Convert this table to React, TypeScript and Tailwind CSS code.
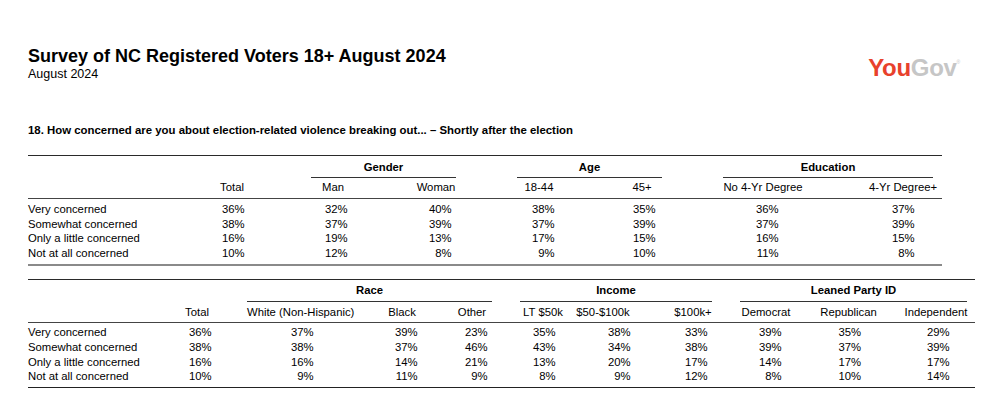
import React from "react";

type Col = { w: string; head?: string; pad?: string; spacer?: boolean };

const t1Cols: Col[] = [
  { w: "w-[171px]" },
  { w: "w-[66px]", head: "Total", pad: "pl-[2px]" },
  { w: "w-[17px]", spacer: true },
  { w: "w-[102px]", head: "Man", pad: "pl-[6px]" },
  { w: "w-[104px]", head: "Woman", pad: "pl-[8px]" },
  { w: "w-[102px]", head: "18-44", pad: "pl-[8px]" },
  { w: "w-[104px]", head: "45+", pad: "pl-[4px]" },
  { w: "w-[138px]", head: "No 4-Yr Degree", pad: "pl-[8px]" },
  { w: "w-[32px]", spacer: true },
  { w: "w-[78px]", head: "4-Yr Degree+", pad: "pl-0" },
];

const t1Groups = [
  { w: "w-[254px]" },
  { w: "w-[206px]", label: "Gender", m: "ml-[29px] mr-[32px]" },
  { w: "w-[206px]", label: "Age", m: "ml-[29px] mr-[32px]" },
  { w: "w-[248px]", label: "Education", m: "ml-[29px] mr-[9px]" },
];

const t1Rows: [string, number[]][] = [
  ["Very concerned", [36, 32, 40, 38, 35, 36, 37]],
  ["Somewhat concerned", [38, 37, 39, 37, 39, 37, 39]],
  ["Only a little concerned", [16, 19, 13, 17, 15, 16, 15]],
  ["Not at all concerned", [10, 12, 8, 9, 10, 11, 8]],
];

const t2Cols: Col[] = [
  { w: "w-[142px]" },
  { w: "w-[54px]", head: "Total", pad: "pl-[6px]" },
  { w: "w-[23px]", spacer: true },
  { w: "w-[106px]", head: "White (Non-Hispanic)", pad: "pl-[4px]" },
  { w: "w-[98px]", head: "Black", pad: "pl-[8px]" },
  { w: "w-[42px]", head: "Other", pad: "pl-[8px]" },
  { w: "w-[27px]", spacer: true },
  { w: "w-[46px]", head: "LT $50k", pad: "pl-[2px]" },
  { w: "w-[74px]", head: "$50-$100k", pad: "pl-[32px]" },
  { w: "w-[6px]", spacer: true },
  { w: "w-[94px]", head: "$100k+", pad: "pl-[6px]" },
  { w: "w-[52px]", head: "Democrat", pad: "pl-[8px]" },
  { w: "w-[8px]", spacer: true },
  { w: "w-[97px]", head: "Republican", pad: "pl-[2px]" },
  { w: "w-[78px]", head: "Independent", pad: "pl-[4px]" },
];

const t2Groups = [
  { w: "w-[219px]" },
  { w: "w-[246px]", label: "Race", m: "ml-0 mr-[1px]" },
  { w: "w-[27px]" },
  { w: "w-[220px]", label: "Income", m: "ml-0 mr-[28px]" },
  { w: "w-[235px]", label: "Leaned Party ID", m: "ml-0 mr-[8px]" },
];

const t2Rows: [string, number[]][] = [
  ["Very concerned", [36, 37, 39, 23, 35, 38, 33, 39, 35, 29]],
  ["Somewhat concerned", [38, 38, 37, 46, 43, 34, 38, 39, 37, 39]],
  ["Only a little concerned", [16, 16, 14, 21, 13, 20, 17, 14, 17, 17]],
  ["Not at all concerned", [10, 9, 11, 9, 8, 9, 12, 8, 10, 14]],
];

function Table({
  cols,
  groups,
  rows,
  width,
  groupPt,
  groupPb,
  headPt,
  headPb,
  bodyPt,
  bodyPb,
  bottom,
  mt,
}: {
  cols: Col[];
  groups: { w: string; label?: string; m?: string }[];
  rows: [string, number[]][];
  width: string;
  groupPt: string;
  groupPb: string;
  headPt: string;
  headPb: string;
  bodyPt: string;
  bodyPb: string;
  bottom: string;
  mt: string;
}) {
  return (
    <div className={`${width} ${mt} border-t border-[#2a2a2a] text-[11.3px] text-black`}>
      <div className={`flex ${groupPt}`}>
        {groups.map((g, i) => (
          <div key={i} className={`${g.w} shrink-0`}>
            {g.label ? (
              <div
                className={`${g.m} ${groupPb} border-b border-[#333] text-center font-bold leading-[14px] whitespace-nowrap`}
              >
                {g.label}
              </div>
            ) : null}
          </div>
        ))}
      </div>
      <div className={`flex ${headPt} ${headPb} border-b border-[#444] leading-[14px]`}>
        {cols.map((c, i) => (
          <div key={i} className={`${c.w} shrink-0 text-center whitespace-nowrap`}>
            {c.head ?? ""}
          </div>
        ))}
      </div>
      <div className={`${bodyPt} ${bodyPb} ${bottom}`}>
        {rows.map(([label, vals]) => {
          let vi = 0;
          return (
            <div key={label} className="flex leading-[14.67px]">
              {cols.map((c, i) => {
                if (i === 0)
                  return (
                    <div key={i} className={`${c.w} shrink-0 whitespace-nowrap`}>
                      {label}
                    </div>
                  );
                if (c.spacer) return <div key={i} className={`${c.w} shrink-0`} />;
                const v = vals[vi++];
                return (
                  <div key={i} className={`${c.w} ${c.pad} shrink-0 flex justify-center`}>
                    <div className="w-[23px] text-right">{v}%</div>
                  </div>
                );
              })}
            </div>
          );
        })}
      </div>
    </div>
  );
}

export default function App() {
  return (
    <div className="w-[1003px] h-[417px] bg-white overflow-hidden pt-[47px] pl-[28px] font-['Liberation_Sans',Arial,Helvetica,sans-serif] text-black">
      <div className="flex">
        <div>
          <div className="text-[18px] leading-[18px] font-bold">
            Survey of NC Registered Voters 18+ August 2024
          </div>
          <div className="mt-[2px] text-[12.5px] leading-[14px]">August 2024</div>
        </div>
        <div className="ml-auto mr-[43px] mt-[9px] flex items-start text-[24px] leading-[24px] font-bold tracking-[-0.3px]">
          <span className="text-[#e8412c]">You</span>
          <span className="text-[#c6c6c6]">Gov</span>
          <span className="text-[5px] leading-[5px] mt-[4px] text-[#c6c6c6] font-normal">®</span>
        </div>
      </div>
      <div className="mt-[42px] text-[11.4px] leading-[14px] font-bold whitespace-nowrap">
        18. How concerned are you about election-related violence breaking out... – Shortly after the election
      </div>
      <Table
        cols={t1Cols}
        groups={t1Groups}
        rows={t1Rows}
        width="w-[914px]"
        mt="mt-[18px]"
        groupPt="pt-[4px]"
        groupPb="pb-[3px]"
        headPt="pt-[2px]"
        headPb="pb-[4px]"
        bodyPt="pt-[3px]"
        bodyPb="pb-[3.6px]"
        bottom="border-b-2 border-[#8a8a8a]"
      />
      <Table
        cols={t2Cols}
        groups={t2Groups}
        rows={t2Rows}
        width="w-[947px]"
        mt="mt-[13px]"
        groupPt="pt-[3px]"
        groupPb="pb-[4px]"
        headPt="pt-[3px]"
        headPb="pb-[3px]"
        bodyPt="pt-[2px]"
        bodyPb="pb-[3px]"
        bottom="border-b border-[#222]"
      />
    </div>
  );
}
